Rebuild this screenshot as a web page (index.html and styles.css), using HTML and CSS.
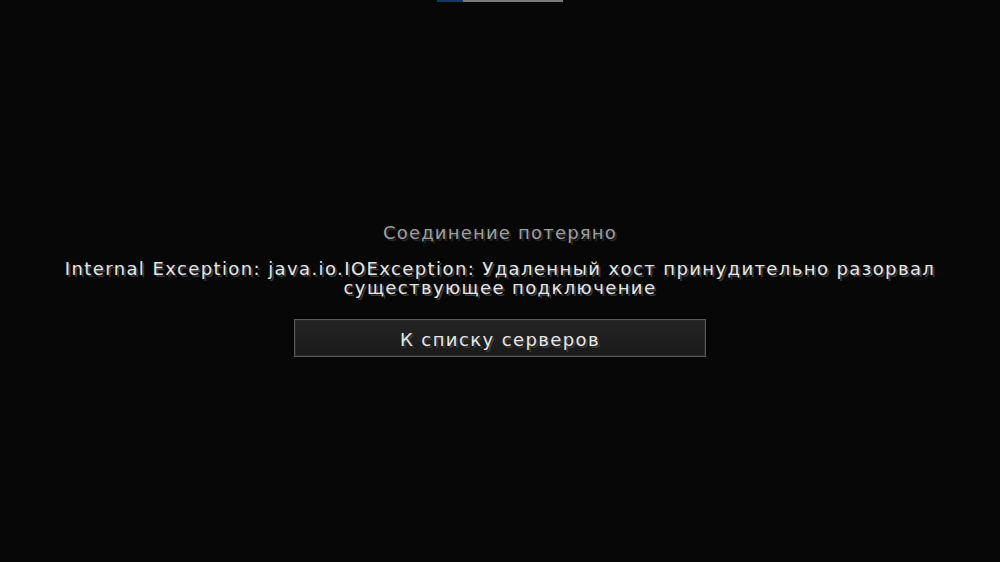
FILE: index.html
```html
<!DOCTYPE html>
<html lang="ru">
<head>
    <meta charset="UTF-8">
    <meta name="viewport" content="width=device-width, initial-scale=1.0">
    <title>Соединение потеряно</title>
    <link rel="stylesheet" href="styles.css">
</head>
<body>

<div class="progress">
    <div class="progress-fill"></div>
</div>

<main class="screen">
    <h1 class="title">Соединение потеряно</h1>
    <p class="reason">Internal Exception: java.io.IOException: Удаленный хост принудительно разорвал<br>существующее подключение</p>
    <button type="button" class="menu-button">К списку серверов</button>
</main>

</body>
</html>
```

FILE: styles.css
```css
/* Basic reset */
* {
    margin: 0;
    padding: 0;
    box-sizing: border-box;
}

body {
    background-color: #070707;
    font-family: "DejaVu Sans", "Noto Sans", sans-serif;
    font-size: 18px;
    letter-spacing: 1.4px;
    color: #e0e0e0;
    height: 562px;
    overflow: hidden;
}

.progress {
    display: flex;
    width: 126px;
    height: 2px;
    margin: 0 auto;
    background-color: #7a7a7a;
}

.progress-fill {
    width: 26px;
    background-color: #0b3c6e;
}

.screen {
    display: flex;
    flex-direction: column;
    align-items: center;
    padding-top: 219px;
}

.title {
    font-size: 18px;
    font-weight: normal;
    line-height: 24px;
    letter-spacing: 1.2px;
    color: #a0a0a0;
    text-shadow: 2px 2px 0 #282828;
}

.reason {
    margin-top: 14px;
    line-height: 19px;
    text-align: center;
    color: #e8e8e8;
    text-shadow: 2px 2px 0 #3a3a3a;
}

.menu-button {
    margin-top: 22px;
    width: 412px;
    height: 38px;
    padding-top: 2px;
    font-family: inherit;
    font-size: 18px;
    letter-spacing: 1.4px;
    color: #e8e8e8;
    text-shadow: 2px 2px 0 #3a3a3a;
    background: linear-gradient(#242424, #1a1a1a);
    border: 1px solid #5c5c5c;
    box-shadow: inset 0 0 0 1px #2a2a2a;
    outline: 1px solid #000;
}
```
